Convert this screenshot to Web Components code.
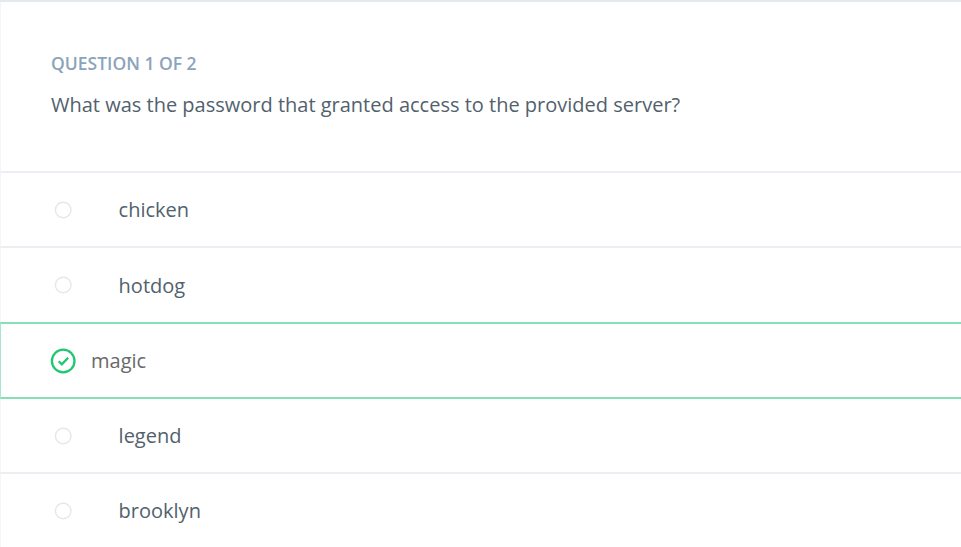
<!DOCTYPE html>
<html lang="en"><head><meta charset="utf-8"><title>Quiz</title>
<style>body{margin:0;background:#fff;font-family:"Open Sans","Noto Sans",sans-serif;color:#52616c}</style></head><body>
<quiz-card>
<quiz-question label="QUESTION 1 OF 2">What was the password that granted access to the provided server?</quiz-question>
<quiz-option>chicken</quiz-option>
<quiz-option style="height:76px">hotdog</quiz-option>
<quiz-option correct>magic</quiz-option>
<quiz-option after-correct>legend</quiz-option>
<quiz-option>brooklyn</quiz-option>
</quiz-card>
<script>
class QuizCard extends HTMLElement{
  constructor(){super();this.attachShadow({mode:'open'}).innerHTML=`<style>
  :host{display:flex;flex-direction:column;box-sizing:border-box;height:547px;overflow:hidden;border-top:2px solid #e4e9ed}
  </style><slot></slot>`;}
}
class QuizQuestion extends HTMLElement{
  constructor(){super();this.attachShadow({mode:'open'});}
  connectedCallback(){this.shadowRoot.innerHTML=`<style>
  :host{display:flex;flex-direction:column;box-sizing:border-box;flex:none;height:169px;padding:48px 50px 0 50px;border-left:1px solid #f3f5f7}
  h2{margin:0;font-size:17.5px;line-height:26px;font-weight:600;color:#8ba4bc}
  p{margin:13px 0 0;font-size:20px;line-height:31px;white-space:nowrap}
  </style><h2>${this.getAttribute('label')}</h2><p><slot></slot></p>`;}
}
class QuizOption extends HTMLElement{
  constructor(){super();this.attachShadow({mode:'open'});}
  connectedCallback(){
  const icon=this.hasAttribute('correct')
  ?`<svg width="26" height="26" viewBox="0 0 26 26" fill="none" stroke="#20c770"><circle cx="13.2" cy="13" r="11.3" stroke-width="2.3"/><path d="M8.7 13.3l3.1 3.1 6.4-6.6" stroke-width="2.3"/></svg>`
  :`<svg width="26" height="26" viewBox="0 0 26 26"><circle cx="13.2" cy="13" r="7.8" fill="#fff" stroke="#e3e8ed" stroke-width="1.4"/></svg>`;
  this.shadowRoot.innerHTML=`<style>
  :host{display:flex;align-items:center;box-sizing:border-box;flex:none;height:75px;padding-left:49px;border-left:1px solid #f3f5f7;border-top:2px solid #ebeff3;font-size:20px;line-height:31px;gap:42.6px}
  :host([correct]){height:77px;border:2px solid #88dfb5;border-left:1px solid #a9e8ca;border-right:0;gap:15px;color:#696969}
  :host([after-correct]){height:73px;border-top:0}
  svg{display:block;flex:none}
  </style>${icon}<span><slot></slot></span>`;}
}
customElements.define('quiz-card',QuizCard);
customElements.define('quiz-question',QuizQuestion);
customElements.define('quiz-option',QuizOption);
</script></body></html>
